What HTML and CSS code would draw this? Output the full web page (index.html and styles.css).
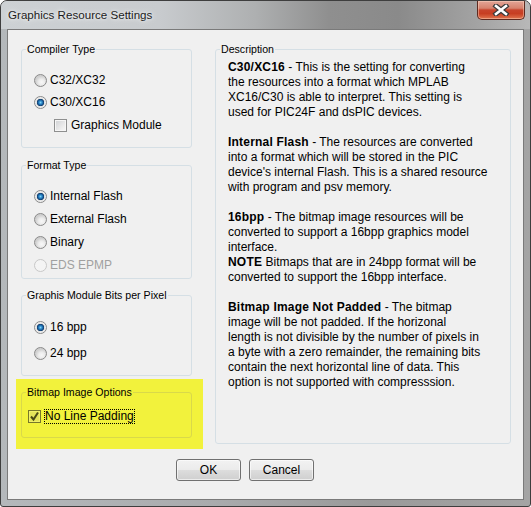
FILE: index.html
```html
<!DOCTYPE html>
<html>
<head>
<meta charset="utf-8">
<link rel="stylesheet" href="styles.css">
</head>
<body>
<div class="window">
  <div class="titlebar">
    <span class="title">Graphics Resource Settings</span>
    <div class="close">
      <svg width="18" height="12" viewBox="0 0 18 12">
        <path d="M4 2 L14 10 M14 2 L4 10" stroke="#3b3b3b" stroke-width="5" stroke-linecap="square" fill="none"/>
        <path d="M4 2 L14 10 M14 2 L4 10" stroke="#ffffff" stroke-width="2.6" stroke-linecap="square" fill="none"/>
      </svg>
    </div>
  </div>
  <div class="client">
    <div class="main">
      <div class="left">
        <div class="group g1">
          <div class="legend">Compiler Type</div>
          <div class="row"><span class="radio"></span><span class="lbl">C32/XC32</span></div>
          <div class="row"><span class="radio on"></span><span class="lbl">C30/XC16</span></div>
          <div class="row sub"><span class="check"></span><span class="lbl wide">Graphics Module</span></div>
        </div>
        <div class="group g2">
          <div class="legend">Format Type</div>
          <div class="row"><span class="radio on"></span><span class="lbl">Internal Flash</span></div>
          <div class="row"><span class="radio"></span><span class="lbl">External Flash</span></div>
          <div class="row"><span class="radio"></span><span class="lbl">Binary</span></div>
          <div class="row disabled"><span class="radio dis"></span><span class="lbl">EDS EPMP</span></div>
        </div>
        <div class="group g3">
          <div class="legend">Graphis Module Bits per Pixel</div>
          <div class="row"><span class="radio on"></span><span class="lbl">16 bpp</span></div>
          <div class="row"><span class="radio"></span><span class="lbl">24 bpp</span></div>
        </div>
        <div class="highlight">
          <div class="group g4">
            <div class="legend">Bitmap Image Options</div>
            <div class="row"><span class="check checked">
              <svg width="11" height="11" viewBox="0 0 11 11"><path d="M2 5.5 L4.5 8.5 L9 1.5" stroke="#4a4a16" stroke-width="2" fill="none"/></svg>
            </span><span class="focus">No Line Padding</span></div>
          </div>
        </div>
      </div>
      <div class="group desc">
        <div class="legend">Description</div>
        <div class="desc-text">
          <p><b>C30/XC16</b> - This is the setting for converting<br>the resources into a format which MPLAB<br>XC16/C30 is able to interpret. This setting is<br>used for PIC24F and dsPIC devices.</p>
          <p><b>Internal Flash</b> - The resources are converted<br>into a format which will be stored in the PIC<br>device's internal Flash. This is a shared resource<br>with program and psv memory.</p>
          <p><b>16bpp</b> - The bitmap image resources will be<br>converted to support a 16bpp graphics model<br>interface.<br><b>NOTE</b> Bitmaps that are in 24bpp format will be<br>converted to support the 16bpp interface.</p>
          <p><b>Bitmap Image Not Padded</b> - The bitmap<br>image will be not padded. If the horizonal<br>length is not divisible by the number of pixels in<br>a byte with a zero remainder, the remaining bits<br>contain the next horizontal line of data. This<br>option is not supported with compresssion.</p>
        </div>
      </div>
    </div>
    <div class="buttons">
      <button class="btn">OK</button>
      <button class="btn">Cancel</button>
    </div>
  </div>
</div>
</body>
</html>
```
FILE: styles.css
```css
html, body {
  margin: 0;
  padding: 0;
  background: #ffffff;
}
body {
  font-family: "Liberation Sans", Arial, sans-serif;
  font-size: 12px;
  color: #000;
}
.window {
  width: 531px;
  height: 507px;
  box-sizing: border-box;
  border: 1px solid #3e3e3e;
  border-radius: 7px 7px 3px 3px;
  padding: 0 6px 6px 6px;
  display: flex;
  flex-direction: column;
  background: linear-gradient(90deg, #b4b8bb 0%, #a9abad 40%, #9a9a9a 70%, #a4a4a4 100%);
  overflow: hidden;
}
.titlebar {
  margin: 0 -6px;
  height: 28px;
  flex: none;
  display: flex;
  align-items: flex-start;
  padding-left: 7px;
  background: linear-gradient(90deg, #cdd1d4 0%, #c8cbce 30%, #aeb0b1 48%, #8f8f8f 62%, #8a8a8a 75%, #a3a3a3 90%, #b8b8b8 100%);
}
.title {
  margin-top: 6px;
  line-height: 16px;
  font-size: 11.6px;
  color: #1c1c1c;
  text-shadow: 0 0 6px rgba(255,255,255,0.9), 0 0 3px rgba(255,255,255,0.7);
}
.close {
  margin-left: auto;
  margin-right: 5px;
  width: 48px;
  height: 19px;
  box-sizing: border-box;
  border: 1px solid #5e2a20;
  border-top: none;
  border-radius: 0 0 5px 5px;
  background: linear-gradient(180deg, #e2a597 0%, #d6826e 40%, #c8442c 50%, #c73e22 70%, #e0754f 100%);
  box-shadow: inset 0 0 0 1px rgba(255,220,200,0.45);
  display: flex;
  align-items: center;
  justify-content: center;
}
.client {
  flex: 1;
  border: 1px solid #7a7a7a;
  background: #f0f0f0;
  display: flex;
  flex-direction: column;
}
.main {
  display: flex;
  padding: 19px 0 0 8px;
}
.left {
  width: 187px;
  display: flex;
  flex-direction: column;
}
.group {
  box-sizing: border-box;
  border: 1px solid #d5dfe5;
  border-radius: 3px;
  display: flex;
  flex-direction: column;
  margin-left: 5px;
  width: 171px;
}
.legend {
  align-self: flex-start;
  font-size: 10.6px;
  line-height: 13px;
  margin: -7px 0 -6px 4px;
  padding: 0 1px;
  background: #f0f0f0;
  color: #000;
}
.row {
  display: flex;
  align-items: center;
  height: 16px;
  padding-left: 12px;
}
.g1 { height: 99px; }
.g1 .row:nth-child(2) { margin-top: 22px; }
.g1 .row:nth-child(3) { margin-top: 6px; }
.g1 .row.sub { margin-top: 7px; padding-left: 32px; }
.g2 { height: 114px; margin-top: 17px; }
.g2 .row { margin-top: 7px; }
.g2 .row:nth-child(2) { margin-top: 22px; }
.g3 { height: 81px; margin-top: 16px; }
.g3 .row { margin-top: 10px; }
.g3 .row:nth-child(2) { margin-top: 23px; }
.highlight {
  margin-top: 3px;
  height: 70px;
  box-sizing: border-box;
  padding-top: 13px;
  background: #f2f23c;
}
.g4 {
  height: 46px;
  border-color: #d9d94a;
}
.g4 .legend { background: #f2f23c; }
.g4 .row { margin-top: 15px; padding-left: 6px; }
.radio {
  flex: none;
  width: 13px;
  height: 13px;
  box-sizing: border-box;
  border-radius: 50%;
  border: 1px solid #8a8a8a;
  background: radial-gradient(circle at 60% 65%, #f8f8f8 0, #ececec 3px, #cfcfcf 6px);
  margin-right: 3px;
}
.radio.on {
  background: radial-gradient(circle at 50% 50%, #7fd3f5 0, #2a87c8 1.6px, #185592 2.8px, #0f3a66 3.4px, #e2e2e2 4px, #f2f2f2 5.5px);
}
.radio.dis {
  border-color: #c8c8c8;
  background: #f4f4f4;
}
.disabled .lbl { color: #a0a0a0; }
.check {
  flex: none;
  width: 13px;
  height: 13px;
  box-sizing: border-box;
  border: 1px solid #8e8f8f;
  background: linear-gradient(135deg, #cfd1d4 0%, #eeeeee 70%, #f7f7f7 100%);
  box-shadow: inset 0 0 0 1px #f6f6f6;
  margin-right: 4px;
  display: flex;
  align-items: center;
  justify-content: center;
}
.check.checked {
  border-color: #77772a;
  background: #e4e45a;
  box-shadow: inset 0 0 0 1px #f0f068;
  margin-right: 3px;
}
.lbl { line-height: 16px; white-space: nowrap; }
.focus {
  border: 1px dotted #000;
  line-height: 13px;
  padding: 0;
  white-space: nowrap;
}
.desc {
  margin-left: 12px;
  width: 296px;
  height: 395px;
}
.desc-text {
  padding: 10px 0 0 12px;
  font-size: 12px;
  line-height: 15px;
  white-space: nowrap;
}
.desc-text p { margin: 0 0 15px 0; }
.desc-text b { letter-spacing: 0.2px; }
.buttons {
  display: flex;
  gap: 8px;
  padding-left: 168px;
  margin-top: 10px;
}
.btn {
  width: 65px;
  height: 22px;
  box-sizing: border-box;
  border: 1px solid #707070;
  border-radius: 3px;
  font-family: "Liberation Sans", Arial, sans-serif;
  font-size: 12px;
  color: #000;
  padding: 0;
  background: linear-gradient(180deg, #f2f2f2 0%, #ebebeb 50%, #dddddd 51%, #cfcfcf 100%);
  box-shadow: inset 0 0 0 1px rgba(255,255,255,0.6);
}
```
